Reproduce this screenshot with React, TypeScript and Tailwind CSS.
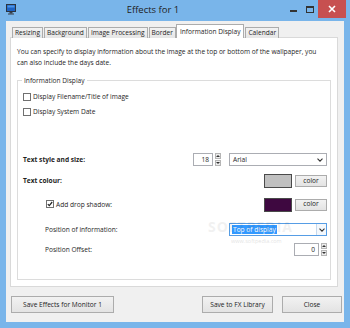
import React from 'react';

const TABS = ['Resizing', 'Background', 'Image Processing', 'Border', 'Information Display', 'Calendar'];
const ACTIVE = 'Information Display';

function MonitorIcon() {
  return (
    <svg width="10" height="11" viewBox="0 0 10 11">
      <rect x="0.5" y="0.5" width="9" height="7" fill="#1d63c4" stroke="#2b3440" />
      <rect x="1.5" y="1.5" width="7" height="2" fill="#4d95e8" />
      <rect x="3.5" y="8" width="3" height="1.5" fill="#3a3f46" />
      <rect x="2" y="9.5" width="6" height="1" fill="#3a3f46" />
    </svg>
  );
}

function Checkbox({ checked }: { checked?: boolean }) {
  return (
    <span className="flex h-[8px] w-[8px] shrink-0 items-center justify-center border border-[#707070] bg-white">
      {checked && (
        <svg width="6" height="6" viewBox="0 0 6 6">
          <path d="M0.8 3.1 L2.3 4.6 L5.2 1" fill="none" stroke="#222" strokeWidth="1.2" />
        </svg>
      )}
    </span>
  );
}

function Spinner({ value, w }: { value: string; w: string }) {
  return (
    <div className="flex h-[13px] items-stretch gap-[2px]">
      <div className={`${w} flex items-center justify-end border border-[#abadb3] bg-white pr-[3px]`}>{value}</div>
      <div className="flex w-[6px] flex-col gap-[1px]">
        <span className="flex flex-1 items-center justify-center border border-[#b5b5b5] bg-[#ececec]">
          <span className="h-0 w-0 border-x-[2px] border-b-[2px] border-x-transparent border-b-[#333]" />
        </span>
        <span className="flex flex-1 items-center justify-center border border-[#b5b5b5] bg-[#ececec]">
          <span className="h-0 w-0 border-x-[2px] border-t-[2px] border-x-transparent border-t-[#333]" />
        </span>
      </div>
    </div>
  );
}

function Chevron() {
  return (
    <svg width="6" height="4" viewBox="0 0 6 4">
      <path d="M0.5 0.7 L3 3.2 L5.5 0.7" fill="none" stroke="#333" strokeWidth="1.1" />
    </svg>
  );
}

function ColorPick({ swatch }: { swatch: string }) {
  return (
    <div className="flex items-center gap-[3px]">
      <div className={`h-[14px] w-[28px] border border-[#4a4a4a] ${swatch}`} />
      <button className="h-[12px] w-[32px] border border-[#acacac] bg-gradient-to-b from-[#f2f2f2] to-[#e3e3e3] text-[6.6px] leading-none text-[#222]">
        color
      </button>
    </div>
  );
}

export default function App() {
  return (
    <div className="relative flex h-[328px] w-[350px] flex-col bg-[#79b5ea] font-['Open_Sans',sans-serif] text-[6.6px] text-[#1e1e1e]">
      {/* title bar */}
      <div className="flex h-[21px] items-start">
        <div className="ml-[6px] mt-[4px]">
          <MonitorIcon />
        </div>
        <div className="flex-1 pt-[3px] text-center text-[9.5px] leading-[14px] text-[#222]">Effects for 1</div>
        <div className="flex items-start">
          <div className="mr-[9px] mt-[10px] h-[2px] w-[7px] bg-[#333]" />
          <div className="mr-[4px] mt-[6px] h-[7px] w-[8px] border border-[#333] border-t-2" />
          <div className="flex h-[18px] w-[28px] items-center justify-center bg-[#c75050]">
            <svg width="8" height="8" viewBox="0 0 8 8">
              <path d="M1 1 L7 7 M7 1 L1 7" stroke="white" strokeWidth="1.6" />
            </svg>
          </div>
          <div className="w-[4px]" />
        </div>
      </div>

      {/* client */}
      <div className="mx-[6px] mb-[6px] flex flex-1 flex-col bg-[#f0f0f0]">
        <div className="relative z-10 ml-[6px] mt-[3px] flex h-[14px] items-end">
          {TABS.map((t) =>
            t === ACTIVE ? (
              <div
                key={t}
                className="-ml-[1px] mr-[1px] flex h-[14px] items-start border border-b-0 border-[#acacac] bg-white px-[3px] pt-[1px] leading-[11px]"
              >
                {t}
              </div>
            ) : (
              <div
                key={t}
                className="mr-[1px] flex h-[11px] items-center border border-b-0 border-[#acacac] bg-gradient-to-b from-[#f2f2f2] to-[#e6e6e6] px-[2px] leading-none"
              >
                {t}
              </div>
            ),
          )}
        </div>

        <div className="ml-[4px] mr-[6px] -mt-[1px] flex h-[250px] flex-col border border-[#d9d9d9] bg-white">
          <p className="px-[6px] pt-[8px] leading-[11px]">
            You can specify to display information about the image at the top or bottom of the wallpaper, you
            <br />
            can also include the days date.
          </p>

          <div className="relative mx-[6px] mb-[6px] mt-[12px] flex flex-1 flex-col border border-[#dcdcdc] pl-[5px] pr-[3px]">
            <span className="absolute -top-[6px] left-[4px] bg-white px-[2px] leading-[11px]">Information Display</span>

            <div className="mt-[12px] flex h-[8px] items-center gap-[2px]">
              <Checkbox />
              <span>Display Filename/Title of image</span>
            </div>
            <div className="mt-[7px] flex h-[8px] items-center gap-[2px]">
              <Checkbox />
              <span>Display System Date</span>
            </div>

            <div className="mt-[37px] flex h-[13px] items-center justify-between">
              <span className="font-bold">Text style and size:</span>
              <div className="flex items-center gap-[8px]">
                <Spinner value="18" w="w-[20px]" />
                <div className="flex h-[13px] w-[98px] items-center justify-between border border-[#abadb3] bg-white px-[3px]">
                  <span>Arial</span>
                  <Chevron />
                </div>
              </div>
            </div>

            <div className="mt-[8px] flex h-[14px] items-center justify-between">
              <span className="font-bold">Text colour:</span>
              <ColorPick swatch="bg-[#c0c0c0]" />
            </div>

            <div className="mt-[10px] flex h-[13px] items-center justify-between">
              <div className="ml-[23px] flex items-center gap-[2px]">
                <Checkbox checked />
                <span>Add drop shadow:</span>
              </div>
              <ColorPick swatch="bg-[#3e0840]" />
            </div>

            <div className="mt-[12px] flex h-[13px] items-center justify-between">
              <span className="ml-[22px]">Position of information:</span>
              <div className="flex h-[13px] w-[98px] items-stretch border border-[#569de5] bg-white">
                <div className="flex flex-1 items-center pl-[2px]">
                  <span className="bg-[#3399ff] px-[1px] leading-[9px] text-white">Top of display</span>
                </div>
                <div className="flex w-[10px] items-center justify-center border-l border-[#c5d9ee] bg-[#f4f8fc]">
                  <Chevron />
                </div>
              </div>
            </div>

            <div className="mt-[7px] flex h-[13px] items-center justify-between">
              <span className="ml-[22px]">Position Offset:</span>
              <Spinner value="0" w="w-[25px]" />
            </div>

            {/* watermark */}
            <div className="pointer-events-none absolute left-[190px] top-[139px] text-[14px] font-bold leading-none tracking-[1px] text-[#000] opacity-[0.05]">
              SOFTPEDIA
            </div>
            <div className="pointer-events-none absolute left-[213px] top-[158px] text-[5.5px] leading-none text-[#000] opacity-[0.12]">
              www.softpedia.com
            </div>
          </div>
        </div>

        <div className="mt-[9px] flex h-[17px] items-stretch">
          <button className="ml-[5px] w-[103px] border border-[#acacac] bg-gradient-to-b from-[#f2f2f2] to-[#e3e3e3] text-[6.6px] text-[#222]">
            Save Effects for Monitor 1
          </button>
          <div className="flex-1" />
          <button className="w-[71px] border border-[#acacac] bg-gradient-to-b from-[#f2f2f2] to-[#e3e3e3] text-[6.6px] text-[#222]">
            Save to FX Library
          </button>
          <button className="ml-[9px] mr-[2px] w-[60px] border border-[#acacac] bg-gradient-to-b from-[#f2f2f2] to-[#e3e3e3] text-[6.6px] text-[#222]">
            Close
          </button>
        </div>
      </div>
    </div>
  );
}
